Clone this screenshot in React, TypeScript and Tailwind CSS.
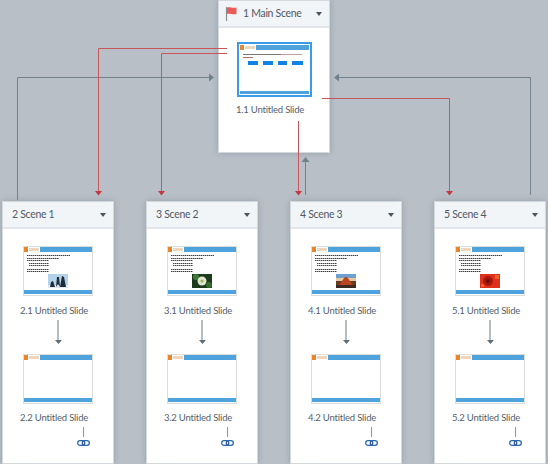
import type { ReactNode } from "react";

const font = { fontFamily: 'Lato, "Noto Sans", sans-serif' };

function Caret() {
  return (
    <svg width="6" height="4" viewBox="0 0 6 4" className="ml-auto mr-[7px]">
      <path d="M0 0h6L3 4z" fill="#4a5560" />
    </svg>
  );
}

function Flag() {
  return (
    <svg width="13" height="16" viewBox="0 0 13 16" className="-ml-[3px] mr-[5px]">
      <path d="M1.500 1v14" stroke="#8a8f94" strokeWidth="1.2" />
      <path d="M2 1.500c3-1 5 1 9.500 0v6.500c-4 1.200-6.500-1-9.500 0z" fill="#ec5b58" />
    </svg>
  );
}

function Header({ title, flag }: { title: string; flag?: boolean }) {
  return (
    <div className="flex h-[27px] items-center border-b-2 border-[#e2e6ea] bg-[#f1f5f8] pl-[9px] text-[10.500px] tracking-[-0.3px] text-[#4f5a65]">
      {flag && <Flag />}
      <span className="whitespace-nowrap">{title}</span>
      <Caret />
    </div>
  );
}

function Bars() {
  const rows = [
    "ml-0 w-[43px]",
    "ml-0 w-[32px] mt-[1.500px]",
    "ml-0 w-[22px] mt-[1.500px]",
    "ml-[2px] w-[20px] mt-[1.500px]",
    "ml-[2px] w-[20px] mt-[1.500px]",
    "ml-0 w-[22px] mt-[2.500px]",
    "ml-0 w-[22px] mt-[1.500px]",
  ];
  return (
    <div className="pl-[3px] pt-[3px]">
      {rows.map((r, i) => (
        <div
          key={i}
          className={`h-[1px] bg-[repeating-linear-gradient(90deg,#444444_0,#444444_1px,#a5a5a5_1px,#a5a5a5_2px)] ${r}`}
        />
      ))}
    </div>
  );
}

function Logo() {
  return (
    <div className="flex h-[5px] w-[16px] shrink-0 items-center gap-[1px] bg-white">
      <div className="h-[5px] w-[4px] bg-[#e8862e]" />
      <div className="h-[3px] w-[10px] bg-[#eed6bd]" />
    </div>
  );
}

function Thumb({ children }: { children?: ReactNode }) {
  return (
    <div className="flex h-[50px] w-[70px] flex-col border border-[#dcdcdc] bg-white">
      <div className="flex h-[5px] shrink-0">
        <Logo />
        <div className="flex-1 bg-[#4fa3dc]" />
      </div>
      <div className="min-h-0 flex-1">{children}</div>
      <div className="mb-[1px] h-[4px] shrink-0 bg-[#4fa3dc]" />
    </div>
  );
}

const photos: Record<string, ReactNode> = {
  s1: (
    <>
      <rect width="20" height="14" fill="#b4d2ea" />
      <rect y="11" width="20" height="3" fill="#dfe8ee" />
      <path d="M2 13l1-5 2-1 2 6zM8 13l1-10 2 0 1 10-2-3zM12 13l2-11 2 1 2 10z" fill="#1f2c3a" />
    </>
  ),
  s2: (
    <>
      <rect width="20" height="14" fill="#1d3a1c" />
      <circle cx="4" cy="3" r="3" fill="#3f7a35" />
      <circle cx="17" cy="11" r="3" fill="#376b2e" />
      <circle cx="10" cy="7" r="4.500" fill="#dfe6d2" />
      <circle cx="10" cy="7" r="1.600" fill="#9fb65a" />
    </>
  ),
  s3: (
    <>
      <rect width="20" height="6" fill="#6d9fd0" />
      <rect y="4" width="20" height="3" fill="#e6c8a0" />
      <rect y="7" width="20" height="7" fill="#6a3a20" />
      <path d="M3 11l6-8h2l6 8z" fill="#b9461f" />
      <rect y="11" width="20" height="3" fill="#3a2a22" />
    </>
  ),
  s4: (
    <>
      <rect width="20" height="14" fill="#e0301a" />
      <circle cx="8" cy="7" r="5" fill="#a81810" />
      <circle cx="8" cy="7" r="2" fill="#6e0c08" />
      <rect x="15" y="1" width="4" height="4" fill="#f2602c" />
      <rect x="1" y="10" width="3" height="3" fill="#f2602c" />
    </>
  ),
};

function PhotoThumb({ photo }: { photo: string }) {
  return (
    <Thumb>
      <Bars />
      <svg width="20" height="14" viewBox="0 0 20 14" className="mx-auto mt-[2px]">
        {photos[photo]}
      </svg>
    </Thumb>
  );
}

function Label({ children }: { children: string }) {
  return (
    <div className="h-[16px] pr-[8px] text-center text-[9.500px] leading-[16px] tracking-[-0.2px] text-[#56616b]">{children}</div>
  );
}

function LinkMark() {
  return (
    <div className="ml-[74px] mt-[1px] flex w-[12px] flex-col items-center">
      <div className="h-[10px] w-[1px] bg-[#d27a7a]" />
      <svg width="13" height="6" viewBox="0 0 13 6" className="mt-[3px]">
        <rect x="0.700" y="0.700" width="7" height="4.600" rx="2.300" fill="none" stroke="#2a64a8" strokeWidth="1.300" />
        <rect x="5.300" y="0.700" width="7" height="4.600" rx="2.300" fill="none" stroke="#2a64a8" strokeWidth="1.300" />
      </svg>
    </div>
  );
}

function SceneCard({ n, name, photo }: { n: number; name: string; photo: string }) {
  return (
    <div className="h-[263px] w-[112px] shrink-0 border border-[#d3d8dd] bg-white shadow-[0_0_6px_rgba(90,100,110,0.35)]">
      <Header title={`${n} ${name}`} />
      <div className="flex justify-center pt-[17px]">
        <PhotoThumb photo={photo} />
      </div>
      <div className="pt-[7px]">
        <Label>{`${n}.1 Untitled Slide`}</Label>
      </div>
      <div className="flex flex-col items-center pt-[1px]">
        <div className="h-[20px] w-[2px] bg-[#b4bdc4]" />
        <svg width="7" height="4" viewBox="0 0 7 4">
          <path d="M0 0h7L3.500 4z" fill="#5c6f7b" />
        </svg>
      </div>
      <div className="flex justify-center pt-[10px]">
        <Thumb />
      </div>
      <div className="pt-[6px]">
        <Label>{`${n}.2 Untitled Slide`}</Label>
      </div>
      <LinkMark />
    </div>
  );
}

function MainThumb() {
  return (
    <div className="flex h-[55px] w-[75px] flex-col border-2 border-[#3d9ae8] bg-white p-[1px]">
      <div className="flex h-[5px] shrink-0">
        <Logo />
        <div className="flex-1 bg-[#4fa3dc]" />
      </div>
      <div className="flex-1 pl-[3px] pr-[1px] pt-[4px]">
        <div className="flex h-[1px] gap-0">
          <div className="w-[38px] bg-[#777777]" />
          <div className="w-[21px] bg-[#c99a9a]" />
        </div>
        <div className="mt-[2px] h-[1px] w-[10px] bg-[#b06a6a]" />
        <div className="mt-[3px] flex justify-between px-[5px]">
          <div className="h-[3.500px] w-[10px] bg-[#0f82e6]" />
          <div className="h-[3.500px] w-[10px] bg-[#0f82e6]" />
          <div className="h-[3.500px] w-[9px] bg-[#0f82e6]" />
          <div className="h-[3.500px] w-[11px] bg-[#0f82e6]" />
        </div>
      </div>
      <div className="h-[3px] shrink-0 bg-[#4fa3dc]" />
    </div>
  );
}

function Connectors() {
  const red = "#c9545a";
  const gray = "#6f828d";
  return (
    <svg width="548" height="464" viewBox="0 0 548 464" className="absolute left-0 top-0">
      <g fill="none" strokeWidth="1">
        <path d="M17.500 200V77.500H211" stroke={gray} />
        <path d="M530.500 195V77.500H337" stroke={gray} />
        <path d="M305.500 195V160" stroke={gray} />
        <path d="M227 48.500H98.500V192" stroke={red} />
        <path d="M227 53.500H161.500V192" stroke={red} />
        <path d="M298.500 121V192" stroke={red} />
        <path d="M322 98.500H449.500V192" stroke={red} />
      </g>
      <path d="M214 77.500l-5-4v8z M334 77.500l5-4v8z M305.500 157l-4 5h8z" fill={gray} />
      <path d="M95 191h7l-3.500 4.500z M158 191h7l-3.500 4.500z M295 191h7l-3.500 4.500z M446 191h7l-3.500 4.500z" fill="#c23a40" />
    </svg>
  );
}

export default function App() {
  return (
    <div className="relative h-[464px] w-[548px] overflow-hidden bg-[#b8bfc7]" style={font}>
      <div className="mx-auto h-[153px] w-[112px] border border-[#d3d8dd] bg-white shadow-[0_0_6px_rgba(90,100,110,0.35)]">
        <Header title="1 Main Scene" flag />
        <div className="flex justify-center pt-[14px]">
          <MainThumb />
        </div>
        <div className="pt-[5px]">
          <Label>1.1 Untitled Slide</Label>
        </div>
      </div>
      <div className="mt-[48px] flex gap-[32px] pl-[2px]">
        <SceneCard n={2} name="Scene 1" photo="s1" />
        <SceneCard n={3} name="Scene 2" photo="s2" />
        <SceneCard n={4} name="Scene 3" photo="s3" />
        <SceneCard n={5} name="Scene 4" photo="s4" />
      </div>
      <Connectors />
    </div>
  );
}
